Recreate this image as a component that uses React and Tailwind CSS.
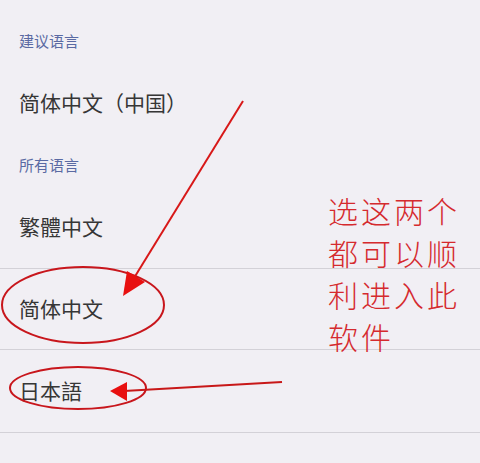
import React from 'react';

const FONT = { fontFamily: '"Noto Sans CJK SC", "Noto Sans", sans-serif' };

function Header({ children, h }) {
  return (
    <div className={`flex items-center px-[19px] text-[15px] text-[#5a6aa3] ${h}`}>
      {children}
    </div>
  );
}

function Row({ children, h, border }) {
  return (
    <div className={`flex items-center px-[19px] text-[21px] text-[#363636] ${h} ${border ? 'border-t border-[#d3d1d7]' : ''}`}>
      {children}
    </div>
  );
}

export default function App() {
  return (
    <div className="relative w-[480px] h-[463px] overflow-hidden bg-[#f1eff4]" style={FONT}>
      <div className="flex flex-col pt-[21px]">
        <Header h="h-[41px]">建议语言</Header>
        <Row h="h-[82px]">简体中文（中国）</Row>
        <Header h="h-[42px]">所有语言</Header>
        <Row h="h-[82px]">繁體中文</Row>
        <Row h="h-[81px]" border>简体中文</Row>
        <Row h="h-[83px]" border>日本語</Row>
        <Row h="h-[80px]" border>粵語（繁體）</Row>
      </div>

      {/* annotation note */}
      <div className="absolute left-[328px] top-[189px] text-[30px] leading-[42px] tracking-[3px] font-light text-[#d52a2e]">
        <div>选这两个</div>
        <div>都可以顺</div>
        <div>利进入此</div>
        <div>软件</div>
      </div>

      {/* annotation marks */}
      <svg className="absolute inset-0 pointer-events-none" width="480" height="463" viewBox="0 0 480 463">
        <ellipse cx="83" cy="305" rx="81" ry="38" fill="none" stroke="#c8161c" strokeWidth="2" />
        <ellipse cx="78" cy="388" rx="68" ry="21" fill="none" stroke="#c8161c" strokeWidth="2" />
        <line x1="243" y1="101" x2="134" y2="278" stroke="#d81818" strokeWidth="2" />
        <polygon points="123,296 127,271 145,282" fill="#e81010" />
        <line x1="282" y1="382" x2="124" y2="391" stroke="#c81818" strokeWidth="2" />
        <polygon points="110,391 127,382 127,401" fill="#e81010" />
      </svg>
    </div>
  );
}
